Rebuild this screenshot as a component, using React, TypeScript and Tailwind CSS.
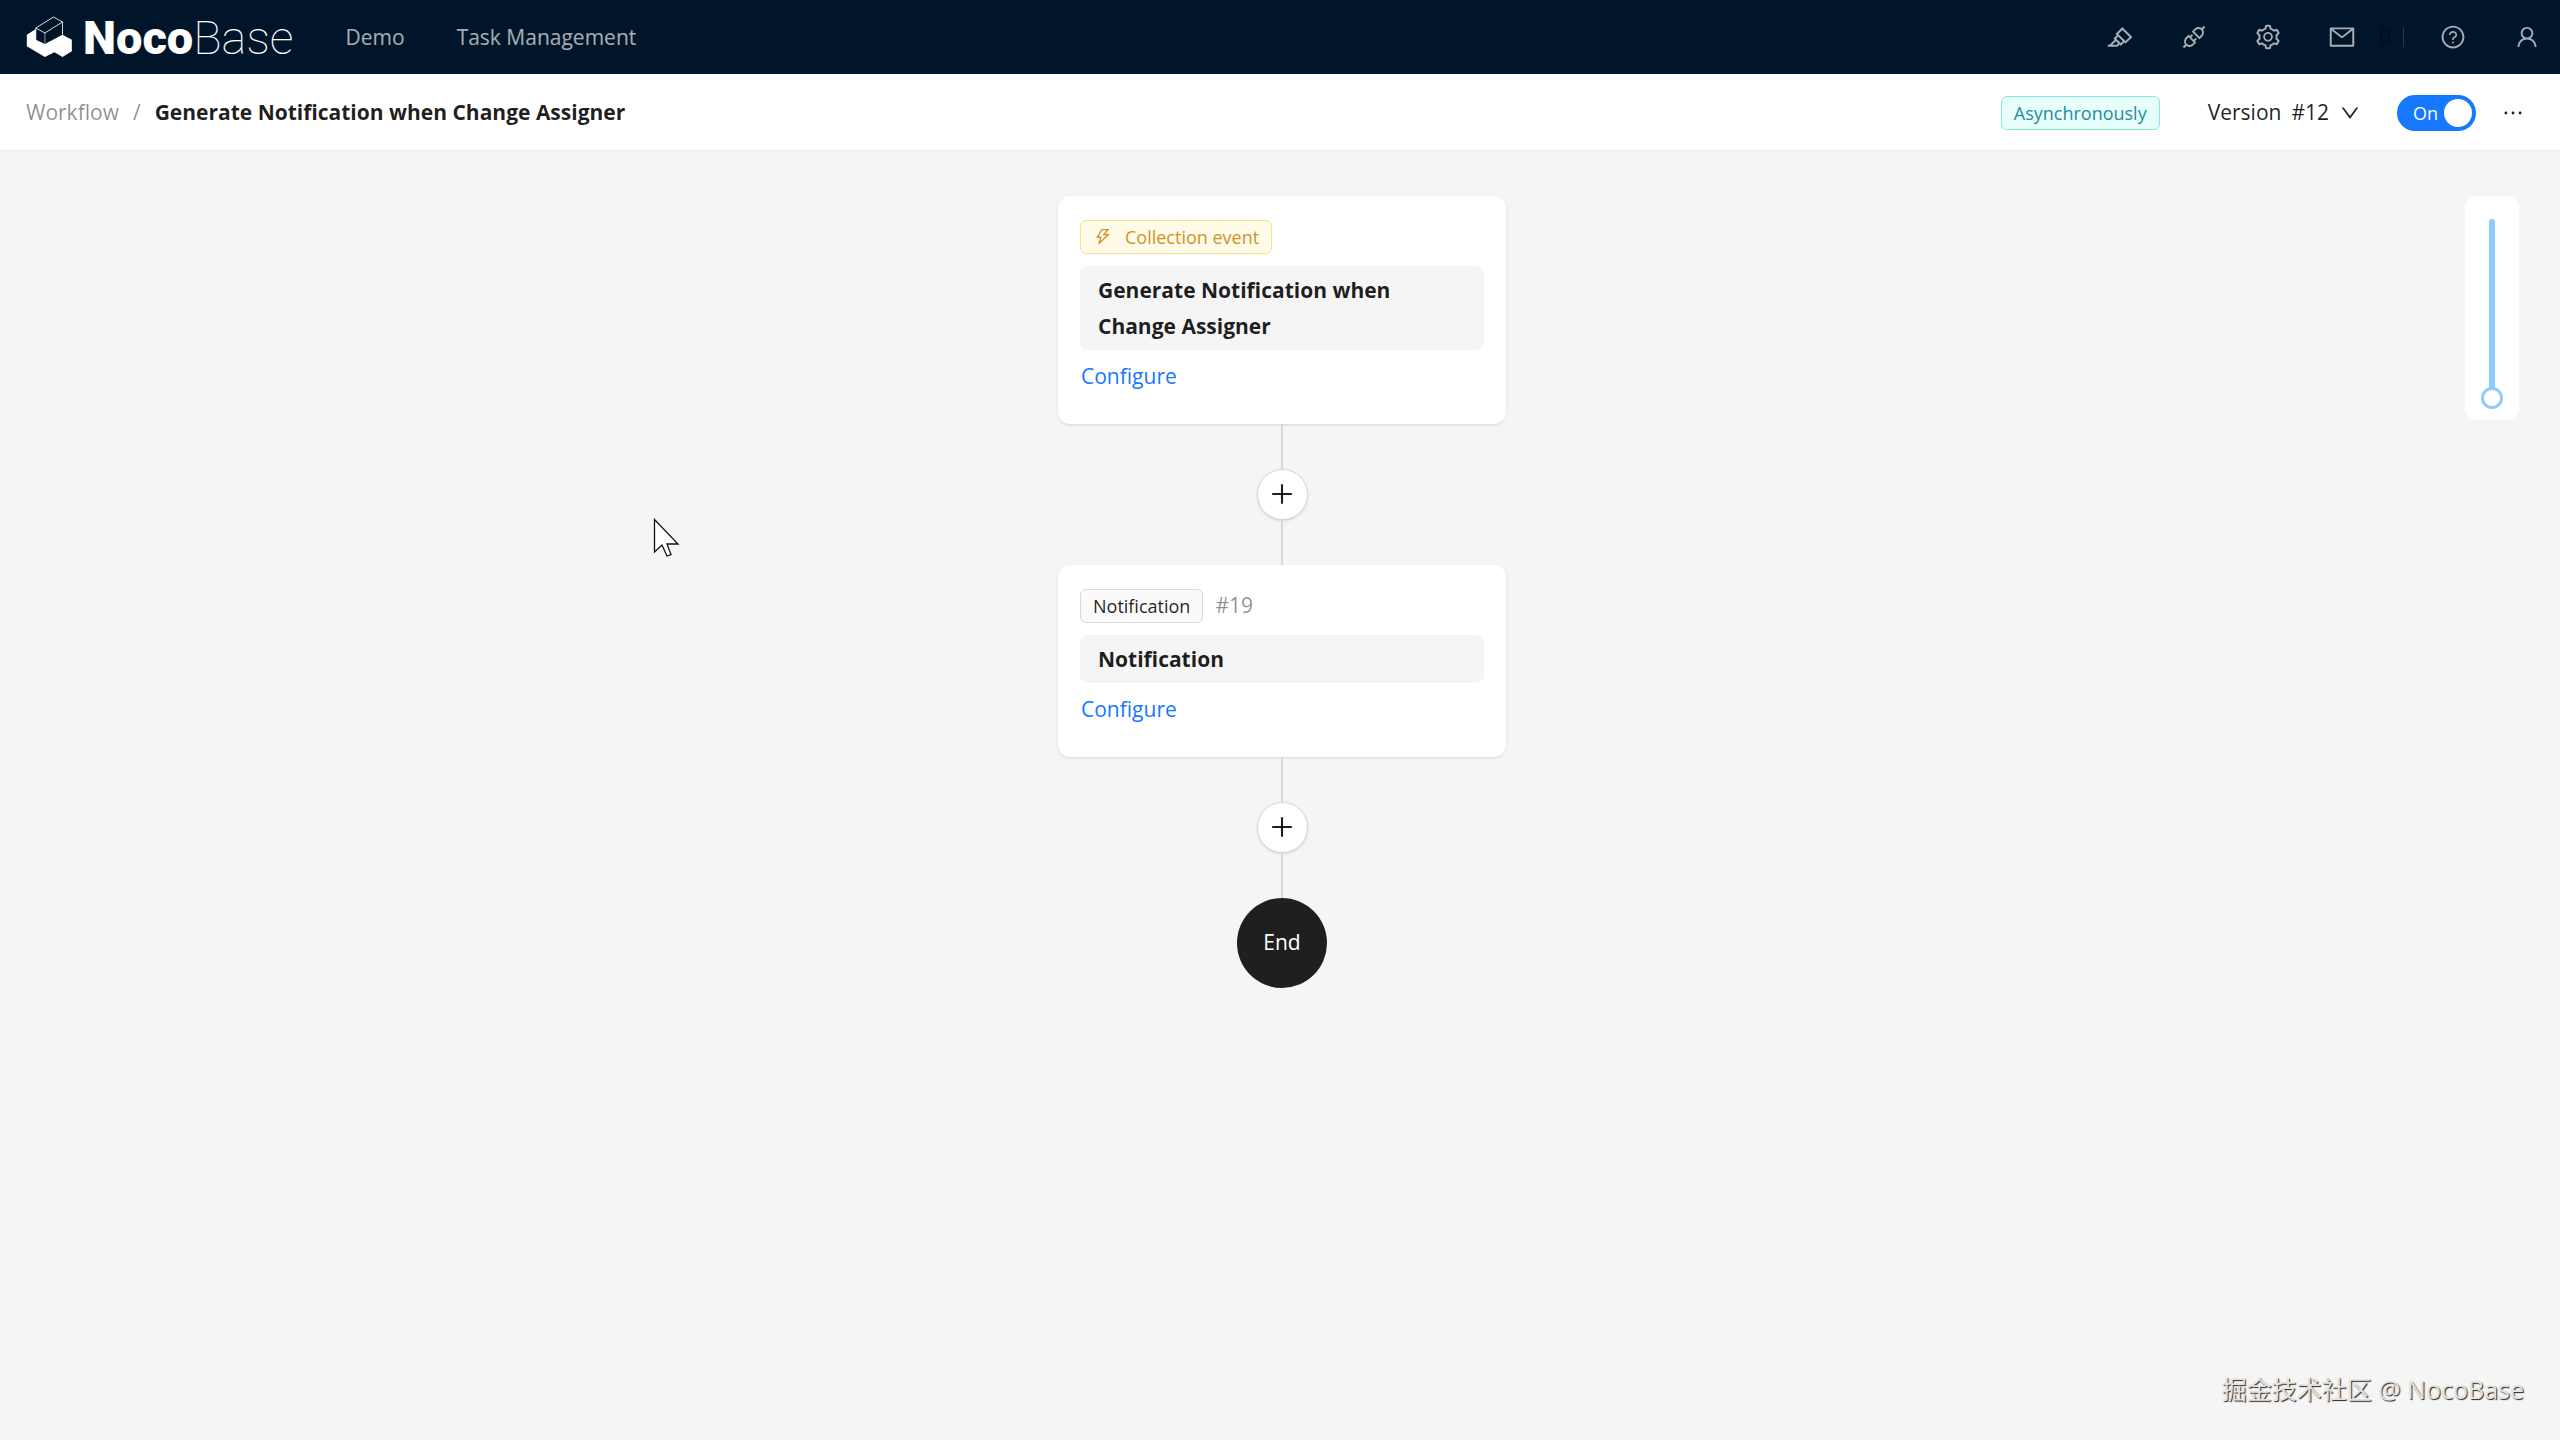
import React, { useState } from 'react';
import {
  AiOutlineApi,
  AiOutlineDown,
  AiOutlineEllipsis,
  AiOutlineHighlight,
  AiOutlineMail,
  AiOutlinePlus,
  AiOutlineQuestionCircle,
  AiOutlineSetting,
  AiOutlineThunderbolt,
  AiOutlineUser,
} from 'react-icons/ai';

const Logo: React.FC = () => (
  <a href="#" aria-label="NocoBase" className="flex items-center gap-2.5 text-white">
    <svg width="47" height="42" viewBox="28 24 140 126" fill="none">
      <path d="M30 80 L57 63 V95 L84 108 L137 80 L165 95 V130 L137 147 L113 133 L84 147 L30 115 Z" fill="currentColor" />
      <path d="M57 60 L110 27 L137 42 V80 M57 60 L84 75 L137 42 M84 75 V108 M57 60 V95" stroke="currentColor" strokeWidth="2.500" />
      <path d="M84 78 V108" stroke="#001529" strokeWidth="2" />
    </svg>
    <span className="flex items-baseline font-['Roboto',sans-serif] text-[47px] leading-none">
      <span className="font-black">Noco</span>
      <span className="font-thin">Base</span>
    </span>
  </a>
);

interface IconButtonProps {
  label: string;
  children: React.ReactNode;
}

const IconButton: React.FC<IconButtonProps> = ({ label, children }) => (
  <button type="button" aria-label={label} className="flex w-[26px] justify-center text-[26px]">
    {children}
  </button>
);

const TopBar: React.FC = () => (
  <header className="flex h-[74px] items-center justify-between bg-[#001529] pl-[26px] pr-5 text-white/65">
    <div className="flex items-center">
      <Logo />
      <nav className="ml-[52px] flex gap-[52px] pt-0.5 text-[21px]">
        <a href="#">Demo</a>
        <a href="#">Task Management</a>
      </nav>
    </div>
    <div className="flex items-center gap-12">
      <IconButton label="UI editor"><AiOutlineHighlight className="size-7 shrink-0" /></IconButton>
      <IconButton label="Plugin manager"><AiOutlineApi className="size-7 shrink-0" /></IconButton>
      <IconButton label="Settings"><AiOutlineSetting className="size-7 shrink-0" /></IconButton>
      <div className="flex items-center">
        <IconButton label="Messages"><AiOutlineMail className="size-7 shrink-0" /></IconButton>
        <span className="ml-6 w-3 text-[21px] text-black/40">0</span>
        <span className="ml-3 h-5 w-px bg-white/15" />
      </div>
      <div className="-ml-3 flex gap-12">
        <IconButton label="Help"><AiOutlineQuestionCircle /></IconButton>
        <IconButton label="User"><AiOutlineUser /></IconButton>
      </div>
    </div>
  </header>
);

const WorkflowBar: React.FC = () => {
  const [enabled, setEnabled] = useState(true);

  return (
    <div className="flex h-[77px] items-center justify-between border-b border-[#ececec] bg-white pl-[26px] pr-[34px] pt-0.5 text-[21px]">
      <nav className="flex items-center gap-3.5" aria-label="Breadcrumb">
        <a href="#" className="text-black/45">Workflow</a>
        <span className="text-black/45">/</span>
        <strong className="font-bold">Generate Notification when Change Assigner</strong>
      </nav>
      <div className="flex items-center">
        <span className="rounded-md border border-[#87e8de] bg-[#e6fffb] px-3 text-lg leading-8 text-[#2a8a9c]">
          Asynchronously
        </span>
        <button type="button" className="ml-12 flex items-center gap-2.5">
          <span>Version</span>
          <span>#12</span>
          <AiOutlineDown className="text-[22px]" />
        </button>
        <button
          type="button"
          role="switch"
          aria-checked={enabled}
          aria-label="Enable workflow"
          onClick={() => setEnabled(!enabled)}
          className={`ml-9 flex h-9 w-[79px] items-center justify-between rounded-full pl-4 pr-1 text-lg text-white ${enabled ? 'bg-[#1677ff]' : 'flex-row-reverse bg-black/25'}`}
        >
          <span>{enabled ? 'On' : 'Off'}</span>
          <span className="size-7 rounded-full bg-white" />
        </button>
        <button type="button" aria-label="More" className="ml-6 text-[26px]">
          <AiOutlineEllipsis />
        </button>
      </div>
    </div>
  );
};

interface NodeCardProps {
  tag: React.ReactNode;
  title: string;
}

const NodeCard: React.FC<NodeCardProps> = ({ tag, title }) => (
  <section className="w-[448px] rounded-xl bg-white p-[22px] shadow-sm">
    <div className="mt-0.5 flex items-center gap-3">{tag}</div>
    <h2 className="mt-3 rounded-lg bg-[#f5f5f5] px-[18px] py-1.5 font-bold leading-9">{title}</h2>
    <div className="mt-2 mb-2 flex leading-9">
      <a href="#" className="ml-px text-[#1677ff]">Configure</a>
    </div>
  </section>
);

const AddNode: React.FC = () => (
  <div className="flex flex-col items-center">
    <div className="h-[45px] w-0.5 bg-[#d9d9d9]" />
    <button
      type="button"
      aria-label="Add node"
      className="flex size-[51px] items-center justify-center rounded-full border border-[#d9d9d9] bg-white pb-0.5 text-[28px] shadow-sm"
    >
      <AiOutlinePlus />
    </button>
    <div className="h-[45px] w-0.5 bg-[#d9d9d9]" />
  </div>
);

const ZoomSlider: React.FC = () => {
  const [zoom, setZoom] = useState(100);

  return (
    <div className="absolute right-[41px] top-[45px] flex h-56 w-[54px] justify-center rounded-xl bg-white pt-[23px] pb-[11px]">
      <input
        type="range"
        aria-label="Zoom"
        min={10}
        max={100}
        value={zoom}
        onChange={(e) => setZoom(Number(e.target.value))}
        className="h-full w-[22px] appearance-none bg-transparent [writing-mode:vertical-lr] [&::-webkit-slider-runnable-track]:w-1.5 [&::-webkit-slider-runnable-track]:rounded-full [&::-webkit-slider-runnable-track]:bg-[#91caff] [&::-webkit-slider-thumb]:-ml-2 [&::-webkit-slider-thumb]:size-[22px] [&::-webkit-slider-thumb]:appearance-none [&::-webkit-slider-thumb]:rounded-full [&::-webkit-slider-thumb]:border-[3px] [&::-webkit-slider-thumb]:border-[#91caff] [&::-webkit-slider-thumb]:bg-white"
      />
    </div>
  );
};

const Cursor: React.FC = () => (
  <svg className="absolute left-[653px] top-[367px]" width="28" height="42" viewBox="0 0 28 42">
    <path d="M1.500 1.500 V34 L9 27 L14 38 L18 36.500 L14 26 H25 Z" fill="#fff" stroke="#111" strokeWidth="1.300" />
  </svg>
);

export default function App() {
  return (
    <div className="flex min-h-screen flex-col bg-[#f5f5f5] font-['Open_Sans','Noto_Sans_CJK_SC',sans-serif] text-[21px] text-black/88">
      <TopBar />
      <WorkflowBar />
      <main className="relative flex grow flex-col items-center pl-1 pt-[45px]">
        <NodeCard
          title="Generate Notification when Change Assigner"
          tag={
            <span className="flex items-center gap-3 rounded-md border border-[#f5e08c] bg-[#fffbe6] px-3 text-lg leading-8 text-[#cf922f]">
              <AiOutlineThunderbolt className="text-xl" />
              Collection event
            </span>
          }
        />
        <AddNode />
        <NodeCard
          title="Notification"
          tag={
            <>
              <span className="rounded-md border border-[#d9d9d9] bg-[#fafafa] px-3 text-lg leading-8">Notification</span>
              <span className="text-black/45">#19</span>
            </>
          }
        />
        <AddNode />
        <div className="flex size-[90px] items-center justify-center rounded-full bg-[#1f1f1f] text-white">End</div>
        <ZoomSlider />
        <Cursor />
        <div className="absolute bottom-8 right-9 text-[25px] text-[#e4e4e4] [text-shadow:1px_1px_1px_#222]">
          掘金技术社区 @ NocoBase
        </div>
      </main>
    </div>
  );
}
